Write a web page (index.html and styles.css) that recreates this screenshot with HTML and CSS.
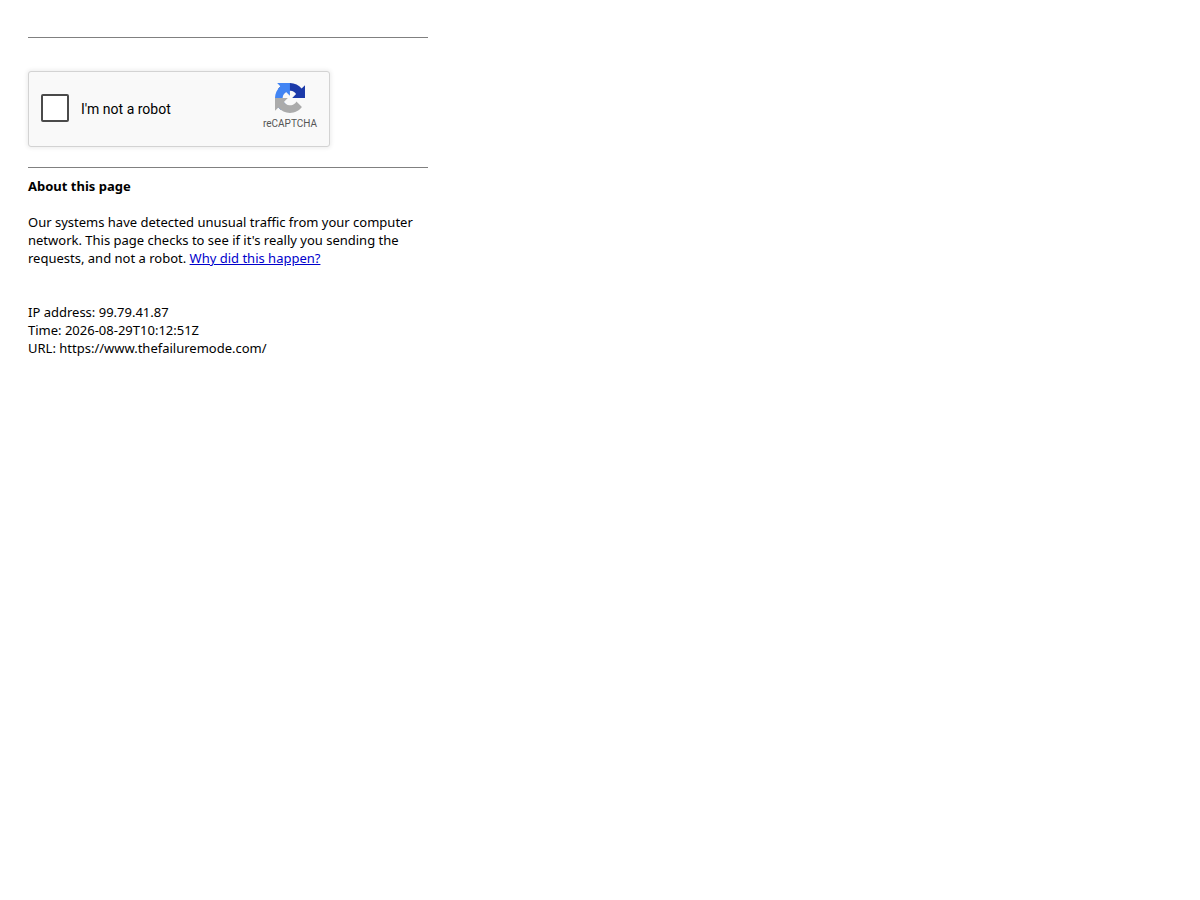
FILE: index.html
```html
<!DOCTYPE html>
<html lang="en">
<head>
<meta charset="utf-8">
<meta name="viewport" content="width=device-width, initial-scale=1">
<title>https://www.thefailuremode.com/</title>
<link rel="stylesheet" href="styles.css">
</head>
<body>
<main class="page">
  <hr class="rule">
  <form class="captcha">
    <input class="captcha-box" type="checkbox" id="robot">
    <label class="captcha-label" for="robot">I'm not a robot</label>
    <div class="brand">
      <svg class="brand-logo" viewBox="0 0 64 64" aria-hidden="true">
        <path fill="#1c3aa9" d="M64 31.955l-.033-1.37V4.687l-7.16 7.16C50.948 4.674 42.033.093 32.05.093c-10.4 0-19.622 4.96-25.458 12.64l11.736 11.86a15.55 15.55 0 0 1 4.754-5.334c2.05-1.6 4.952-2.906 8.968-2.906.485 0 .86.057 1.135.163 4.976.393 9.288 3.14 11.828 7.124l-8.307 8.307L64 31.953"/>
        <path fill="#4285f4" d="M31.862.094l-1.37.033H4.594l7.16 7.16C4.58 13.147 0 22.06 0 32.046c0 10.4 4.96 19.622 12.64 25.458L24.5 45.768a15.55 15.55 0 0 1-5.334-4.754c-1.6-2.05-2.906-4.952-2.906-8.968 0-.485.057-.86.163-1.135.393-4.976 3.14-9.288 7.124-11.828l8.307 8.307L31.86.095"/>
        <path fill="#ababab" d="M.001 32.045l.033 1.37v25.898l7.16-7.16c5.86 7.173 14.774 11.754 24.76 11.754 10.4 0 19.622-4.96 25.458-12.64l-11.736-11.86a15.55 15.55 0 0 1-4.754 5.334c-2.05 1.6-4.952 2.906-8.968 2.906-.485 0-.86-.057-1.135-.163-4.976-.393-9.288-3.14-11.828-7.124l8.307-8.307c-10.522.04-22.4.066-27.295-.005"/>
      </svg>
      <span class="brand-name">reCAPTCHA</span>
    </div>
  </form>
  <hr class="rule">
  <section class="about">
    <h1 class="title">About this page</h1>
    <p class="text">Our systems have detected unusual traffic from your computer network. This page checks to see if it's really you sending the requests, and not a robot. <a class="link" href="#why">Why did this happen?</a></p>
    <p class="details">IP address: 99.79.41.87<br>Time: 2026-08-29T10:12:51Z<br>URL: https://www.thefailuremode.com/</p>
  </section>
</main>
</body>
</html>
```
FILE: styles.css
```css
* {
  box-sizing: border-box;
}

body {
  margin: 0;
  padding: 37px 28px;
  background: #fff;
  color: #000;
  font: 13px/18px "Noto Sans", sans-serif;
}

.page {
  max-width: 400px;
}

.rule {
  height: 1px;
  margin: 0;
  border: 0;
  background: #808080;
}

.captcha {
  display: flex;
  align-items: center;
  max-width: 302px;
  margin: 33px 0 20px;
  padding: 11px 12px 13px;
  border: 1px solid #d3d3d3;
  border-radius: 3px;
  background: #f9f9f9;
  box-shadow: 0 0 4px 1px rgba(0, 0, 0, 0.08);
}

.captcha-box {
  appearance: none;
  width: 28px;
  height: 28px;
  margin: 0 12px 0 0;
  border: 2px solid #4a4a4a;
  border-radius: 2px;
  background: #fff;
}

.captcha-box:checked {
  background: #4285f4;
}

.captcha-label {
  flex: 1;
  padding-top: 2px;
  font: 14px/18px Roboto, sans-serif;
}

.brand {
  display: flex;
  flex-direction: column;
  align-items: center;
  gap: 4px;
  padding-bottom: 3px;
}

.brand-logo {
  width: 30px;
  height: 30px;
}

.brand-name {
  color: #555;
  font: 10px/13px Roboto, sans-serif;
}

.about {
  padding-top: 9px;
}

.title {
  margin: 0 0 18px;
  font-size: 13px;
  font-weight: 700;
  line-height: 18px;
}

.text {
  margin: 0 0 36px;
}

.link {
  color: #0000cc;
}

.details {
  margin: 0;
}
```
